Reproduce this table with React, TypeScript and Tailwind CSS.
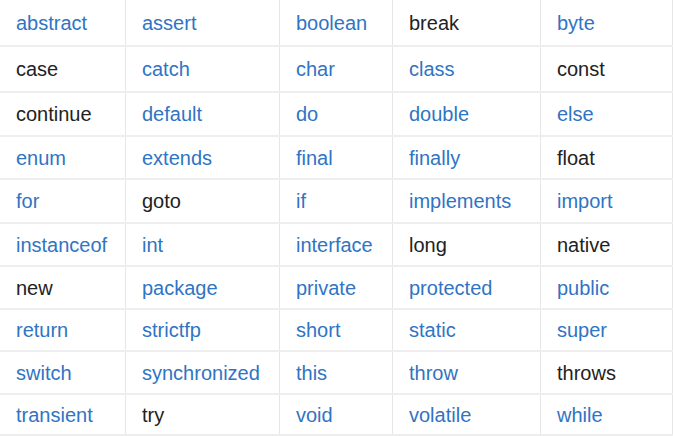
import React from "react";

type Word = { text: string; link: boolean };

const w = (text: string, link = true): Word => ({ text, link });

const rows: { height: string; words: Word[] }[] = [
  { height: "h-[47px]", words: [w("abstract"), w("assert"), w("boolean"), w("break", false), w("byte")] },
  { height: "h-[46px]", words: [w("case", false), w("catch"), w("char"), w("class"), w("const", false)] },
  { height: "h-[44px]", words: [w("continue", false), w("default"), w("do"), w("double"), w("else")] },
  { height: "h-[43px]", words: [w("enum"), w("extends"), w("final"), w("finally"), w("float", false)] },
  { height: "h-[44px]", words: [w("for"), w("goto", false), w("if"), w("implements"), w("import")] },
  { height: "h-[43px]", words: [w("instanceof"), w("int"), w("interface"), w("long", false), w("native", false)] },
  { height: "h-[43px]", words: [w("new", false), w("package"), w("private"), w("protected"), w("public")] },
  { height: "h-[42px]", words: [w("return"), w("strictfp"), w("short"), w("static"), w("super")] },
  { height: "h-[43px]", words: [w("switch"), w("synchronized"), w("this"), w("throw"), w("throws", false)] },
  { height: "h-[41px]", words: [w("transient"), w("try", false), w("void"), w("volatile"), w("while")] },
];

const App: React.FC = () => {
  return (
    <div className="w-[673px] h-[436px] bg-white font-['Liberation_Sans',Arial,sans-serif] text-[20px] overflow-hidden">
      {rows.map((row, i) => (
        <div
          key={i}
          className={`grid grid-cols-[126px_154px_113px_148px_132px] border-b-2 border-[#eeeeee] ${row.height}`}
        >
          {row.words.map((word) => (
            <div
              key={word.text}
              className="flex items-center pl-4 border-r border-[#e6e6e6]"
            >
              <span className={word.link ? "text-[#3074c4]" : "text-[#222222]"}>
                {word.text}
              </span>
            </div>
          ))}
        </div>
      ))}
    </div>
  );
};

export default App;
